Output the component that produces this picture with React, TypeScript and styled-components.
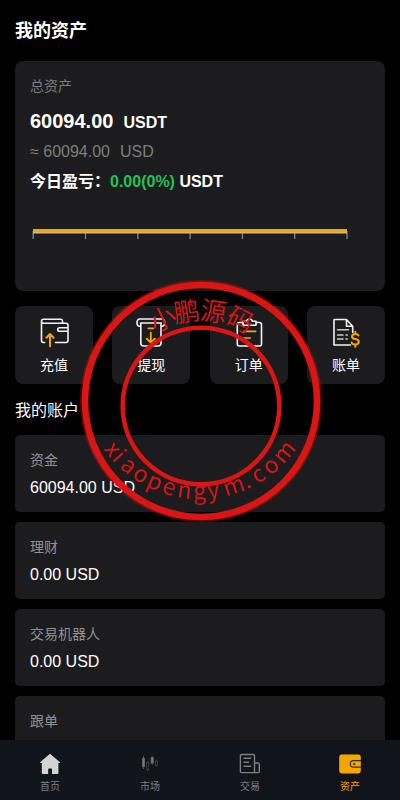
import React from "react";
import styled, { createGlobalStyle } from "styled-components";

const GlobalStyle = createGlobalStyle`
  * { box-sizing: border-box; }
  body {
    margin: 0;
    background: #fff;
    font-family: "Liberation Sans", Arial, "Noto Sans CJK SC", sans-serif;
  }
`;

const orange = "#f7a600";

const Page = styled.div`
  display: flex;
  flex-direction: column;
  height: 100vh;
  margin-right: 1px;
  background: #000;
  color: #fff;
`;

const Content = styled.main`
  flex: 1;
  min-height: 0;
  padding: 15px;
  overflow-y: auto;
  scrollbar-width: none;
`;

const PageTitle = styled.h1`
  margin: 0 0 14px;
  font-size: 18px;
  line-height: 32px;
`;

const SummaryCard = styled.section`
  padding: 15px;
  border-radius: 8px;
  background: #1c1c1e;
`;

const Caption = styled.div`
  color: #7d7d7d;
  font-size: 14px;
  line-height: 20px;
`;

const Amount = styled.div`
  display: flex;
  align-items: baseline;
  gap: 10px;
  margin-top: 10px;
  font-size: 20px;
  font-weight: 700;
  line-height: 30px;
`;

const Unit = styled.span`
  font-size: 16px;
`;

const Approx = styled.div`
  display: flex;
  gap: 10px;
  color: #7d7d7d;
  font-size: 16px;
  line-height: 28px;
`;

const Profit = styled.div`
  font-size: 16px;
  font-weight: 700;
  line-height: 32px;
`;

const Gain = styled.span`
  color: #1fc25a;
`;

const Chart = styled.svg`
  display: block;
  width: 100%;
  height: 78px;
`;

const Actions = styled.div`
  display: flex;
  justify-content: space-between;
  margin-top: 15px;
`;

const ActionButton = styled.button`
  display: flex;
  flex-direction: column;
  align-items: center;
  gap: 4px;
  width: 78px;
  height: 78px;
  padding: 9px 0 0;
  border: 0;
  border-radius: 8px;
  background: #1c1c1e;
  color: #fff;
  font-family: inherit;
  font-size: 14px;
  line-height: 20px;
  cursor: pointer;
`;

const SectionTitle = styled.h2`
  margin: 11px 0 8px;
  font-size: 16px;
  font-weight: 400;
  line-height: 32px;
`;

const AccountList = styled.div`
  display: flex;
  flex-direction: column;
  gap: 10px;
`;

const AccountCard = styled.section`
  min-height: 77px;
  padding: 15px 15px 12px;
  border-radius: 5px;
  background: #1c1c1e;
`;

const AccountName = styled.div`
  margin-bottom: 6px;
  color: #919191;
  font-size: 14px;
  line-height: 20px;
`;

const AccountValue = styled.div`
  font-size: 16px;
  line-height: 24px;
`;

const TabBar = styled.nav`
  display: flex;
  height: 60px;
  background: #12141c;
`;

const Tab = styled.a<{ $active?: boolean }>`
  flex: 1;
  display: flex;
  flex-direction: column;
  align-items: center;
  gap: 4px;
  padding-top: 12px;
  color: ${(p) => (p.$active ? orange : "#7c7f84")};
  font-size: 10px;
  line-height: 14px;
  text-decoration: none;
`;

const StampLayer = styled.svg`
  position: fixed;
  top: 50%;
  left: 50%;
  width: 244px;
  height: 244px;
  margin: -121px 0 0 -122px;
  pointer-events: none;
`;

const actionSvg = {
  width: 36,
  height: 36,
  viewBox: "0 0 36 36",
  fill: "none",
  stroke: "#f4f4f4",
  strokeWidth: 1.6,
  strokeLinecap: "round" as const,
  strokeLinejoin: "round" as const,
  "aria-hidden": true,
};

const DepositIcon = () => (
  <svg {...actionSvg}>
    <path d="M26.5 8V6Q26.5 4.3 25 4.3H7.5Q5.5 4.3 5.5 6.2Q5.5 8.3 8 8.3H30Q32 8.3 32 10.3V12.7M5.5 6.2V25.5Q5.5 27.5 7.5 27.5H8.7M19.5 27.5H30Q32 27.5 32 25.5V16.3M32 12.7H23.5Q21.7 12.7 21.7 14.5Q21.7 16.3 23.5 16.3H32Z" />
    <path d="M14 31.3V19.2M10.4 22.8L14 19L17.6 22.8" stroke={orange} strokeWidth="2" />
  </svg>
);

const WithdrawIcon = () => (
  <svg {...actionSvg}>
    <path d="M7.5 11.2H6.7Q4 11.2 4 7.7Q4 4 7 4H28.5Q31.7 4 31.7 7.5Q31.7 11.2 29 11.2H28.3M7.5 8H28.3M7.8 8V28Q7.8 31 10.8 31H25Q28 31 28 28V8" />
    <path d="M15.5 13.4H20.2M17.8 17.8V27.5M13.8 23.7L17.8 27.6L21.8 23.7" stroke={orange} strokeWidth="1.9" />
  </svg>
);

const OrderIcon = () => (
  <svg {...actionSvg}>
    <path d="M12 7.5H8Q6.3 7.5 6.3 9.5V29Q6.3 31 8.3 31H28.5Q30.5 31 30.5 29V9.5Q30.5 7.5 28.5 7.5H25M12 10.3V6.3H15.5Q16 4 18.5 4Q21 4 21.5 6.3H25V10.3Z" />
    <path d="M13 16.4H24.7M13 23H19.3" stroke={orange} />
  </svg>
);

const BillIcon = () => (
  <svg {...actionSvg}>
    <path d="M22.5 30H6V4.5H18.5L24.7 11.3V17.5M18.5 4.5V11.3H24.7" />
    <path d="M9.5 14.8H20.5M9.5 20H15M18 20H19.3M9.5 24H15M18 24H19.3" stroke="#c7c7ca" />
    <path d="M30.5 20.5Q29.8 19 27.3 19Q24 19 24 21.5Q24 23.6 27.3 24.1Q30.8 24.7 30.8 27.1Q30.8 29.5 27.3 29.5Q24.2 29.5 23.7 27.5M27.3 16.8V19M27.3 29.5V31.7" stroke={orange} strokeWidth="2" />
  </svg>
);

const tabSvg = { width: 24, height: 24, viewBox: "0 0 24 24", fill: "none", "aria-hidden": true };

const HomeIcon = () => (
  <svg {...tabSvg}>
    <path d="M12 1.8L22 10.2Q22.3 11 21.2 11H20.4V21Q20.4 22 19.4 22H14V17.5Q14 16.6 13 16.6H11.2Q10.2 16.6 10.2 17.5V22H4.8Q3.8 22 3.8 21V11H2.8Q1.7 11 2 10.2Z" fill="#d3d3d3" />
  </svg>
);

const MarketIcon = () => (
  <svg {...tabSvg} stroke="#66686b" strokeWidth="0.8">
    <path d="M5.5 4V17M14.2 4V13" />
    <rect x="4.4" y="6.4" width="2.2" height="8" fill="#77797b" />
    <rect x="13.1" y="5.7" width="2.2" height="5.3" fill="#77797b" />
    <g stroke="#424449">
      <path d="M9.7 9V10.5M9.7 17.5V19M18.5 7.5V9M18.5 13.5V15" />
      <rect x="8.6" y="10.5" width="2.2" height="7" />
      <rect x="17.4" y="9" width="2.2" height="4.5" />
    </g>
  </svg>
);

const TradeIcon = () => (
  <svg {...tabSvg} stroke="#7c7d80" strokeWidth="1.4" strokeLinejoin="round">
    <path d="M16.6 20.6H3.5Q2.4 20.6 2.4 19.5V3.5Q2.4 2.5 3.5 2.5H15.3Q16.5 2.5 16.5 3.6V20.6H20Q21.3 20.6 21.3 19.4V12.2Q21.3 11 20 11H16.6" />
    <path d="M5.5 6.2H13.2M5.5 10.2H11M5.5 14.3H13.2" />
  </svg>
);

const AssetsIcon = () => (
  <svg {...tabSvg}>
    <rect x="1.2" y="2.6" width="21.6" height="18.8" rx="2.4" fill={orange} />
    <path d="M23 8.7H15.5Q12.3 8.7 12.3 12Q12.3 15.2 15.5 15.2H23" stroke="#3a2c10" strokeWidth="1.2" />
    <rect x="15.2" y="11" width="2" height="2" rx="0.5" fill="#3a2c10" />
  </svg>
);

const ticks = [0, 1, 2, 3, 4, 5, 6];

const ProfitChart = () => (
  <Chart viewBox="0 0 340 78" aria-hidden>
    {ticks.map((n) => (
      <path key={n} d={`M${3.2 + n * 52.3} 33V41`} stroke="#85868a" strokeWidth="1.3" />
    ))}
    <path d="M3 34.5H317" stroke="#d9b876" strokeWidth="1.8" />
    <path d="M3 32.5H317" stroke={orange} strokeWidth="3" />
  </Chart>
);

const actions = [
  { label: "充值", Icon: DepositIcon },
  { label: "提现", Icon: WithdrawIcon },
  { label: "订单", Icon: OrderIcon },
  { label: "账单", Icon: BillIcon },
];

const accounts: { name: string; value?: string }[] = [
  { name: "资金", value: "60094.00 USD" },
  { name: "理财", value: "0.00 USD" },
  { name: "交易机器人", value: "0.00 USD" },
  { name: "跟单" },
];

const tabs = [
  { label: "首页", Icon: HomeIcon },
  { label: "市场", Icon: MarketIcon },
  { label: "交易", Icon: TradeIcon },
  { label: "资产", Icon: AssetsIcon, active: true },
];

/* Each glyph of the seal with its angle from the vertical axis. */
const sealTop: [string, number][] = [["小", -25], ["鹏", -9], ["源", 8], ["码", 26]];
const sealBottom: [string, number][] = [
  ["x", 52], ["i", 47], ["a", 40], ["o", 32], ["p", 24], ["e", 16], ["n", 8],
  ["g", 0], ["y", -7], ["m", -18], [".", -25], ["c", -32], ["o", -40], ["m", -50],
];

const Seal = () => (
  <StampLayer viewBox="0 0 244 244" role="img" aria-label="小鹏源码 xiaopengym.com">
    <g fill="none" stroke="#db1414">
      <circle cx="122" cy="122" r="119" strokeOpacity="0.35" strokeWidth="4" />
      <circle cx="122" cy="122" r="116" strokeWidth="6.6" />
      <circle cx="122" cy="127" r="78.3" strokeWidth="4.6" />
    </g>
    <g fill="#db1414" fontFamily='"Noto Sans CJK SC", sans-serif' textAnchor="middle">
      {sealTop.map(([ch, angle]) => (
        <text key={ch} x="122" y="41" fontSize="26" transform={`rotate(${angle} 122 122)`}>{ch}</text>
      ))}
      {sealBottom.map(([ch, angle]) => (
        <text key={angle} x="121" y="220" fontSize="23" transform={`rotate(${angle} 121 102)`}>{ch}</text>
      ))}
    </g>
  </StampLayer>
);

export default function App() {
  return (
    <Page>
      <GlobalStyle />
      <Content>
        <PageTitle>我的资产</PageTitle>
        <SummaryCard>
          <Caption>总资产</Caption>
          <Amount>
            <span>60094.00</span>
            <Unit>USDT</Unit>
          </Amount>
          <Approx>
            <span>≈ 60094.00</span>
            <span>USD</span>
          </Approx>
          <Profit>
            今日盈亏：<Gain>0.00(0%)</Gain> USDT
          </Profit>
          <ProfitChart />
        </SummaryCard>
        <Actions>
          {actions.map(({ label, Icon }) => (
            <ActionButton key={label} type="button">
              <Icon />
              {label}
            </ActionButton>
          ))}
        </Actions>
        <SectionTitle>我的账户</SectionTitle>
        <AccountList>
          {accounts.map(({ name, value }) => (
            <AccountCard key={name}>
              <AccountName>{name}</AccountName>
              {value && <AccountValue>{value}</AccountValue>}
            </AccountCard>
          ))}
        </AccountList>
      </Content>
      <TabBar>
        {tabs.map(({ label, Icon, active }) => (
          <Tab key={label} href="#" $active={active} aria-current={active ? "page" : undefined}>
            <Icon />
            {label}
          </Tab>
        ))}
      </TabBar>
      <Seal />
    </Page>
  );
}
